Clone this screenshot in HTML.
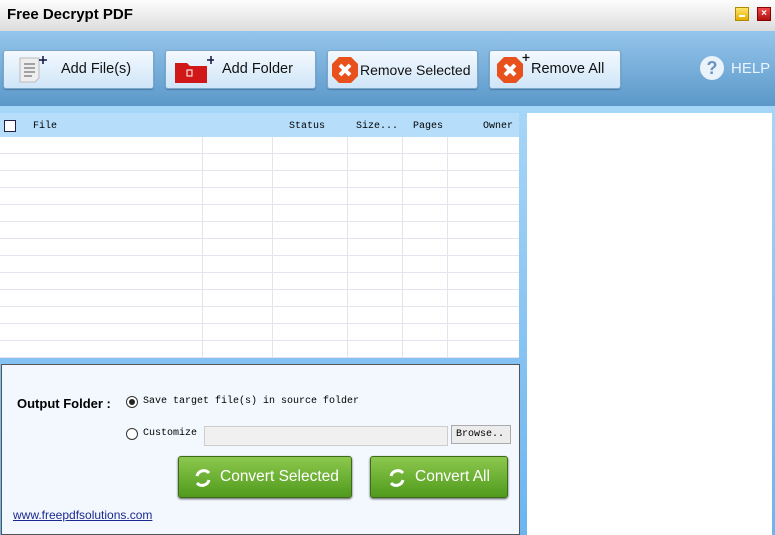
<!DOCTYPE html>
<html><head><meta charset="utf-8"><style>
*{margin:0;padding:0;box-sizing:border-box}
body{width:775px;height:535px;position:relative;overflow:hidden;font-family:"Liberation Sans",sans-serif;background:linear-gradient(#b5def9,#6cb5f0)}
.a{position:absolute;white-space:nowrap}
#title{left:0;top:0;width:775px;height:31px;background:linear-gradient(#fdfdfd,#dcdcdc);font-weight:bold;font-size:15px;padding:6px 0 0 7px}
#tb{left:0;top:31px;width:775px;height:75px;background:linear-gradient(#95c5eb,#5b98c9)}
.btn{top:50px;height:39px;border:1px solid #7ea6c7;border-radius:3px;background:linear-gradient(#f4f9fe,#cfe5f8);font-size:14.5px;color:#111;box-shadow:0 1px 1px #4a7ba8}
.btn span{position:absolute;top:10px}
.hdr{font-family:"Liberation Mono",monospace;font-size:10px;top:121px}
.gbtn{top:456px;height:42px;border:1px solid #3d6b1a;border-radius:3px;background:linear-gradient(#8cc84e,#4f9a1c);color:#fff;font-size:15.5px;box-shadow:0 1px 2px #555}
.mono{font-family:"Liberation Mono",monospace;font-size:10px}
</style></head><body>
<div id="title" class="a">Free Decrypt PDF</div>
<div class="a" style="left:735px;top:7px;width:14px;height:14px;background:linear-gradient(#ffe36a,#e3b000);border:1px solid #b08a00"><div class="a" style="left:3px;top:7px;width:6px;height:2px;background:#fff"></div></div>
<div class="a" style="left:757px;top:7px;width:14px;height:14px;background:linear-gradient(#f04848,#b01010);border:1px solid #800;color:#fff;font-size:10px;line-height:12px;text-align:center;font-weight:bold">×</div>
<div id="tb" class="a"></div>
<div class="a btn" style="left:3px;width:151px">
<svg class="a" style="left:13px;top:4px" width="30" height="30"><path d="M3 3h19v20l-4 4H3z" fill="#eee" stroke="#bbb"/><path d="M7 9h11M7 13h11M7 17h11M7 21h8" stroke="#888" stroke-width="1.5"/><path d="M26 1v8M22 5h8" stroke="#114" stroke-width="1.5"/></svg>
<span style="left:57px">Add File(s)</span></div>
<div class="a btn" style="left:165px;width:151px">
<svg class="a" style="left:8px;top:4px" width="40" height="30"><path d="M1 8h12l3 3h17v17H1z" fill="#d01818"/><rect x="13" y="15" width="5" height="6" fill="none" stroke="#fff"/><path d="M37 1v8M33 5h8" stroke="#114" stroke-width="1.5"/></svg>
<span style="left:56px">Add Folder</span></div>
<div class="a btn" style="left:327px;width:151px">
<svg class="a" style="left:3px;top:5px" width="28" height="28"><polygon points="8,1 20,1 27,8 27,20 20,27 8,27 1,20 1,8" fill="#e8501c"/><path d="M9 9l10 10M19 9L9 19" stroke="#fff" stroke-width="4"/></svg>
<span style="left:32px;font-size:14px;top:11px">Remove Selected</span></div>
<div class="a btn" style="left:489px;width:132px">
<svg class="a" style="left:6px;top:3px" width="34" height="30"><polygon points="8,3 20,3 27,10 27,22 20,29 8,29 1,22 1,10" fill="#e8501c"/><path d="M9 11l10 10M19 11L9 21" stroke="#fff" stroke-width="4"/><path d="M30 0v7M26.5 3.5h7" stroke="#111" stroke-width="1.3"/></svg>
<span style="left:41px">Remove All</span></div>
<div class="a" style="left:700px;top:56px;width:24px;height:24px;border-radius:50%;background:#eaf2fa;color:#6a94bd;font-weight:bold;font-size:18px;text-align:center;line-height:24px">?</div>
<div class="a" style="left:731px;top:60px;color:#eaf4ff;font-size:15px">HELP</div>
<div class="a" style="left:0;top:113px;width:519px;height:24px;background:#b6defb"></div>
<div class="a" style="left:4px;top:120px;width:12px;height:12px;border:1px solid #224;background:#fff"></div>
<div class="a hdr" style="left:33px">File</div>
<div class="a hdr" style="left:289px">Status</div>
<div class="a hdr" style="left:356px">Size...</div>
<div class="a hdr" style="left:413px">Pages</div>
<div class="a hdr" style="left:483px">Owner</div>
<div class="a" style="left:0;top:137px;width:519px;height:221px;background-color:#fff;background-image:repeating-linear-gradient(to bottom,transparent 0 16px,#e4e4ee 16px 17px)"></div>
<div class="a" style="left:202px;top:137px;width:1px;height:221px;background:#e4e4ee"></div>
<div class="a" style="left:272px;top:137px;width:1px;height:221px;background:#e4e4ee"></div>
<div class="a" style="left:347px;top:137px;width:1px;height:221px;background:#e4e4ee"></div>
<div class="a" style="left:402px;top:137px;width:1px;height:221px;background:#e4e4ee"></div>
<div class="a" style="left:447px;top:137px;width:1px;height:221px;background:#e4e4ee"></div>
<div class="a" style="left:527px;top:113px;width:245px;height:422px;background:#fff"></div>
<div class="a" style="left:1px;top:364px;width:519px;height:171px;background:#f3f8fe;border:1px solid #555"></div>
<div class="a" style="left:17px;top:396px;font-size:13px;font-weight:bold">Output Folder :</div>
<div class="a" style="left:126px;top:396px;width:12px;height:12px;border-radius:50%;border:1px solid #333;background:#fff"><div class="a" style="left:2px;top:2px;width:6px;height:6px;border-radius:50%;background:#222"></div></div>
<div class="a mono" style="left:143px;top:396px">Save target file(s) in source folder</div>
<div class="a" style="left:126px;top:428px;width:12px;height:12px;border-radius:50%;border:1px solid #333;background:#fff"></div>
<div class="a mono" style="left:143px;top:428px">Customize</div>
<div class="a" style="left:204px;top:426px;width:244px;height:20px;background:#f0f0f0;border:1px solid #ccc"></div>
<div class="a mono" style="left:451px;top:425px;width:60px;height:19px;background:#ececec;border:1px solid #aaa;padding:3px 0 0 4px">Browse..</div>
<div class="a gbtn" style="left:178px;width:174px"><svg class="a" style="left:14px;top:10px" width="20" height="22"><path d="M4 9a7 7 0 0 1 12-3M16 13a7 7 0 0 1-12 3" fill="none" stroke="#fff" stroke-width="3"/></svg><span class="a" style="left:41px;top:11px">Convert Selected</span></div>
<div class="a gbtn" style="left:370px;width:138px"><svg class="a" style="left:16px;top:10px" width="20" height="22"><path d="M4 9a7 7 0 0 1 12-3M16 13a7 7 0 0 1-12 3" fill="none" stroke="#fff" stroke-width="3"/></svg><span class="a" style="left:44px;top:11px">Convert All</span></div>
<div class="a" style="left:13px;top:508px;font-size:12px;color:#1a2a90;text-decoration:underline">www.freepdfsolutions.com</div>
</body></html>
